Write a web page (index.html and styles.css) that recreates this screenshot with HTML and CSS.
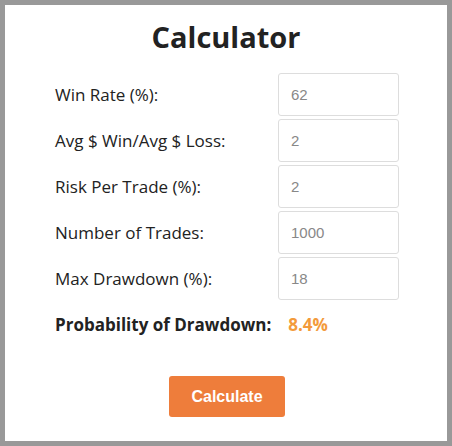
FILE: index.html
```html
<!DOCTYPE html>
<html>
<head>
<meta charset="utf-8">
<link rel="stylesheet" href="styles.css">
</head>
<body>
<div class="frame">
  <h1 class="title">Calculator</h1>
  <form class="form">
    <div class="row"><label class="label">Win Rate (%):</label><input class="field" type="text" value="62"></div>
    <div class="row"><label class="label">Avg $ Win/Avg $ Loss:</label><input class="field" type="text" value="2"></div>
    <div class="row"><label class="label">Risk Per Trade (%):</label><input class="field" type="text" value="2"></div>
    <div class="row"><label class="label">Number of Trades:</label><input class="field" type="text" value="1000"></div>
    <div class="row"><label class="label">Max Drawdown (%):</label><input class="field" type="text" value="18"></div>
    <div class="result"><span class="result-label">Probability of Drawdown:</span><span class="result-value">8.4%</span></div>
    <div class="actions"><button class="btn" type="button">Calculate</button></div>
  </form>
</div>
</body>
</html>
```
FILE: styles.css
```css
* { box-sizing: border-box; }
html, body { margin: 0; padding: 0; background: #999; }
.frame {
  width: 452px;
  height: 446px;
  border: 5px solid #999;
  background: #fff;
  font-family: "Open Sans", sans-serif;
  color: #222;
}
.title {
  margin: 0;
  padding-top: 12px;
  height: 68px;
  text-align: center;
  font-size: 29px;
  font-weight: 700;
  line-height: 40px;
  color: #222;
}
.form {
  padding-left: 50px;
}
.row {
  display: grid;
  grid-template-columns: 223px 121px;
  align-items: center;
  height: 43px;
  margin-bottom: 3px;
}
.label {
  font-size: 17px;
  color: #222;
}
.field {
  width: 121px;
  height: 43px;
  border: 1px solid #ddd;
  border-radius: 3px;
  padding: 0 12px;
  font-family: "Liberation Sans", Arial, sans-serif;
  font-size: 15px;
  color: #888;
  background: #fff;
  outline: none;
}
.result {
  display: flex;
  align-items: center;
  height: 42px;
  gap: 17px;
}
.result-label {
  font-size: 17px;
  font-weight: 700;
  color: #222;
}
.result-value {
  font-size: 17px;
  font-weight: 700;
  color: #f39a3b;
}
.actions {
  display: flex;
  padding-top: 31px;
  padding-left: 114px;
}
.btn {
  width: 116px;
  height: 41px;
  border: none;
  border-radius: 3px;
  background: #ee7d3b;
  color: #fff;
  font-family: "Liberation Sans", Arial, sans-serif;
  font-weight: 700;
  font-size: 16px;
  cursor: pointer;
}
```
